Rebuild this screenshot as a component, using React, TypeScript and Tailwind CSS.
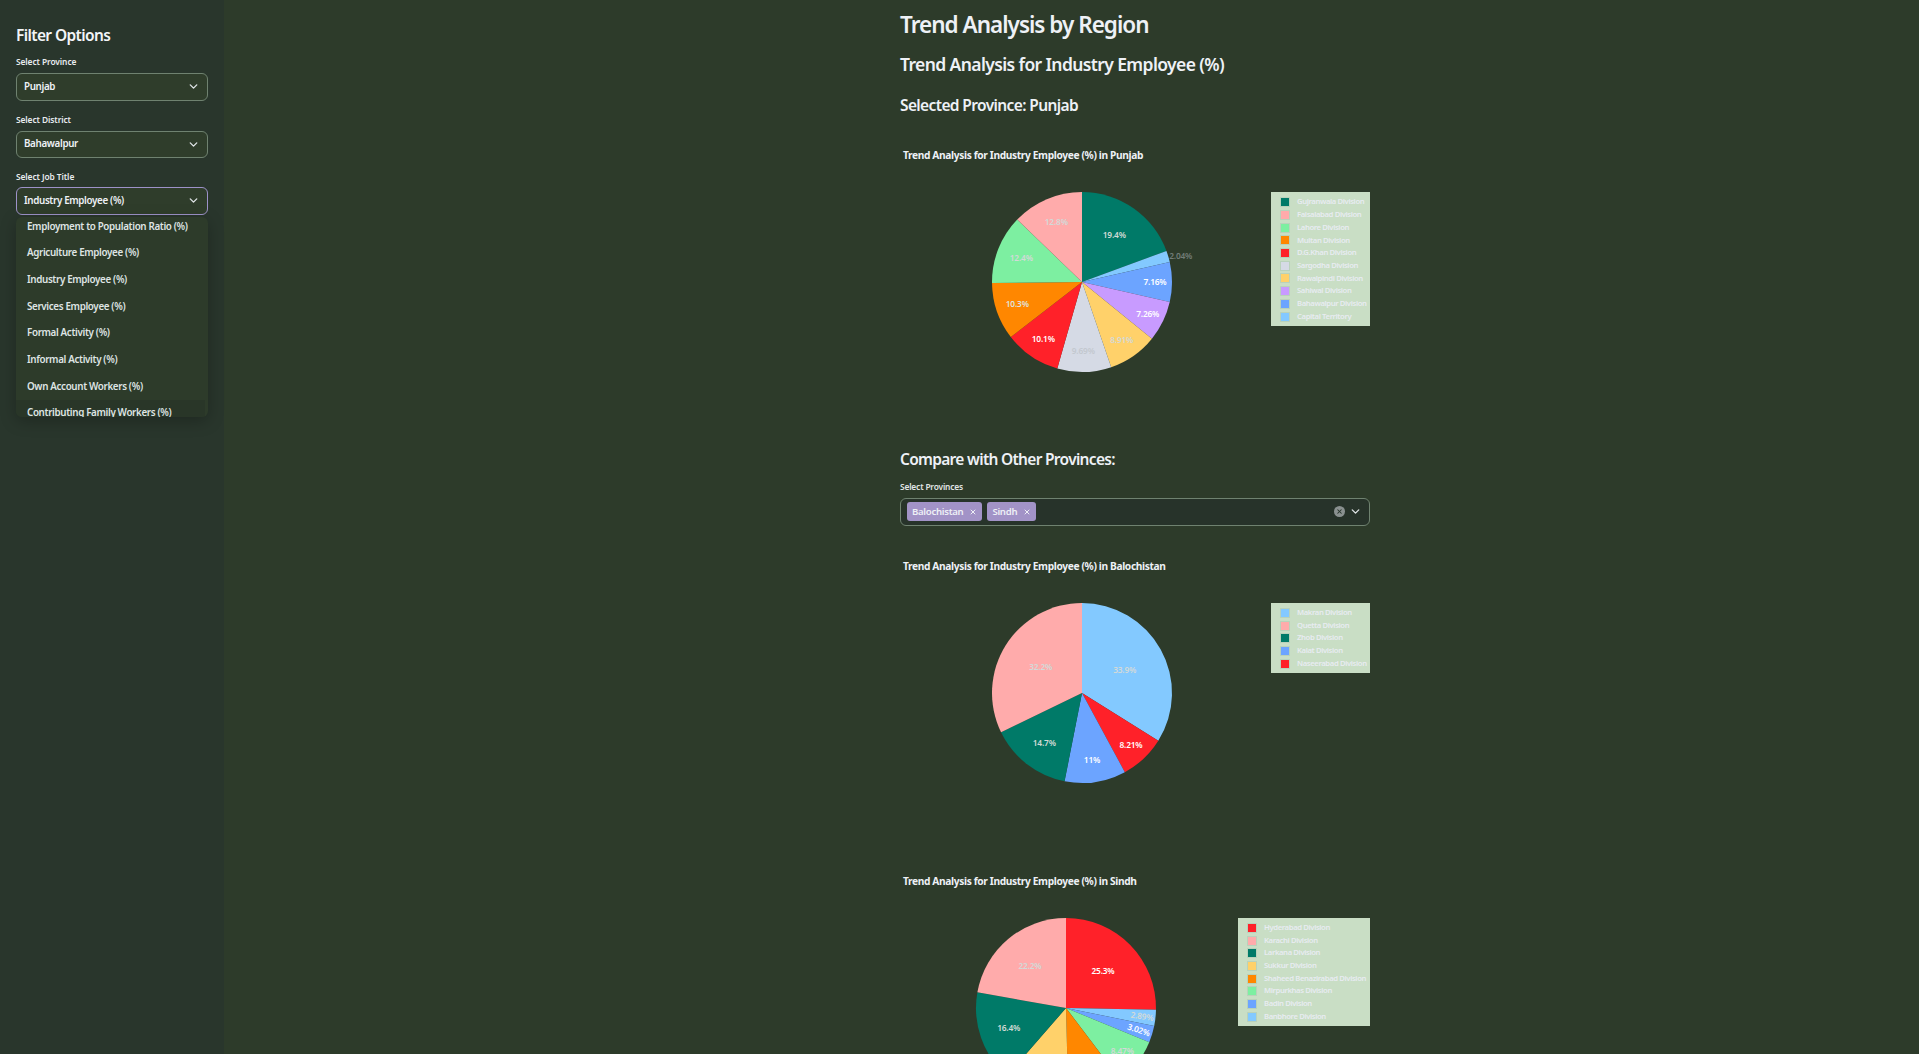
import { ChevronDown, X } from "lucide-react";

const C = {
  teal: "#007A68", pink: "#FFABAB", green: "#7DEFA1", orange: "#FF8700", red: "#FF2129",
  gray: "#D5DAE5", yellow: "#FFD16A", purple: "#C89BFF", blue: "#6CA4FF", sky: "#83C9FF",
};

type Slice = { v: number; c: string };
type Label = { t: string; x: number; y: number; f: string; r?: number };
type Leg = { n: string; c: string };

function arc(cx: number, cy: number, r: number, a: number, b: number) {
  const p = (t: number) => {
    const an = (t / 100) * 2 * Math.PI;
    return `${(cx + r * Math.sin(an)).toFixed(2)} ${(cy - r * Math.cos(an)).toFixed(2)}`;
  };
  const large = b - a > 50 ? 1 : 0;
  return `M${cx} ${cy}L${p(a)}A${r} ${r} 0 ${large} 1 ${p(b)}Z`;
}

function Pie({ cx, slices, labels }: { cx: number; slices: Slice[]; labels: Label[] }) {
  const total = slices.reduce((s, x) => s + x.v, 0);
  let acc = 0;
  return (
    <svg width="310" height="182" className="shrink-0">
      {slices.map((s, i) => {
        const a = acc;
        acc += (s.v / total) * 100;
        return <path key={i} d={arc(cx, 90, 90, a, acc)} fill={s.c} />;
      })}
      {labels.map((l, i) => (
        <text
          key={i}
          x={cx + l.x}
          y={90 + l.y + 3}
          fill={l.f}
          fontSize="8.4"
          fontWeight="600"
          letterSpacing="-0.2"
          textAnchor="middle"
          transform={l.r ? `rotate(${l.r} ${cx + l.x} ${90 + l.y})` : undefined}
        >
          {l.t}
        </text>
      ))}
    </svg>
  );
}

function Legend({ items, w }: { items: Leg[]; w: string }) {
  return (
    <div className={`${w} ml-auto shrink-0 bg-[#c9dec5] pt-[4px] pb-[3px] pl-[9px]`}>
      {items.map((l) => (
        <div key={l.n} className="flex h-[12.7px] items-center">
          <span className="h-[10px] w-[10px] shrink-0 border border-[#b9d2bb]" style={{ background: l.c }} />
          <span className="ml-[7px] whitespace-nowrap text-[7.7px] font-semibold leading-none tracking-[-0.05em] text-[#e8ecf2]">{l.n}</span>
        </div>
      ))}
    </div>
  );
}

function Chart({ title, cx, slices, labels, legend, w, className }: {
  title: string; cx: number; slices: Slice[]; labels: Label[]; legend: Leg[]; w: string; className: string;
}) {
  return (
    <section className={className}>
      <div className="ml-[3px] h-[16px] text-[10.2px] font-bold leading-[16px] tracking-[-0.035em] text-[#eef1f6]">{title}</div>
      <div className="mt-[29px] flex items-start">
        <Pie cx={cx} slices={slices} labels={labels} />
        <Legend items={legend} w={w} />
      </div>
    </section>
  );
}

function Select({ value, focus }: { value: string; focus?: boolean }) {
  return (
    <div className={`flex h-[27.5px] items-center justify-between rounded-[6px] border bg-[#2f3d2b] pl-[7px] pr-[7px] ${focus ? "border-[#9d92c9]" : "border-[#6f8270]"}`}>
      <span className="pt-[1px] text-[9.8px] font-semibold tracking-[-0.035em] text-[#eef1f6]">{value}</span>
      <ChevronDown size={13} strokeWidth={2.5} className="text-[#dfe4e6]" />
    </div>
  );
}

function FieldLabel({ children, className }: { children: string; className: string }) {
  return <div className={`h-[12px] text-[8.4px] font-semibold leading-[12px] tracking-[-0.01em] text-[#e8ecef] ${className}`}>{children}</div>;
}

const options = [
  "Employment to Population Ratio (%)",
  "Agriculture Employee (%)",
  "Industry Employee (%)",
  "Services Employee (%)",
  "Formal Activity (%)",
  "Informal Activity (%)",
  "Own Account Workers (%)",
  "Contributing Family Workers (%)",
];

const punjab: Slice[] = [
  { v: 19.4, c: C.teal }, { v: 2.04, c: C.sky }, { v: 7.16, c: C.blue }, { v: 7.26, c: C.purple },
  { v: 8.91, c: C.yellow }, { v: 9.69, c: C.gray }, { v: 10.1, c: C.red }, { v: 10.3, c: C.orange },
  { v: 12.4, c: C.green }, { v: 12.8, c: C.pink },
];
const soft = "#d3d9d8";
const punjabL: Label[] = [
  { t: "19.4%", x: 32.3, y: -47, f: "#d2dbd6" }, { t: "2.04%", x: 98.7, y: -26, f: "#727d78" },
  { t: "7.16%", x: 73, y: 0, f: "#ffffff" }, { t: "7.26%", x: 65.7, y: 31.7, f: "#ffffff" },
  { t: "8.91%", x: 39.7, y: 58, f: soft }, { t: "9.69%", x: 1.3, y: 69, f: "#c3c8cf" },
  { t: "10.1%", x: -38.7, y: 57, f: "#ffffff" }, { t: "10.3%", x: -64.7, y: 22, f: "#e0e2dc" },
  { t: "12.4%", x: -60.7, y: -24, f: soft }, { t: "12.8%", x: -25.7, y: -60, f: soft },
];
const punjabLeg: Leg[] = [
  { n: "Gujranwala Division", c: C.teal }, { n: "Faisalabad Division", c: C.pink }, { n: "Lahore Division", c: C.green },
  { n: "Multan Division", c: C.orange }, { n: "D.G.Khan Division", c: C.red }, { n: "Sargodha Division", c: C.gray },
  { n: "Rawalpindi Division", c: C.yellow }, { n: "Sahiwal Division", c: C.purple }, { n: "Bahawalpur Division", c: C.blue },
  { n: "Capital Territory", c: C.sky },
];

const balo: Slice[] = [
  { v: 33.9, c: C.sky }, { v: 8.21, c: C.red }, { v: 11, c: C.blue }, { v: 14.7, c: C.teal }, { v: 32.2, c: C.pink },
];
const baloL: Label[] = [
  { t: "33.9%", x: 42.7, y: -23, f: soft }, { t: "8.21%", x: 49, y: 52, f: "#ffffff" }, { t: "11%", x: 10, y: 67, f: "#ffffff" },
  { t: "14.7%", x: -37.7, y: 50, f: "#d2dbd6" }, { t: "32.2%", x: -41.3, y: -26, f: soft },
];
const baloLeg: Leg[] = [
  { n: "Makran Division", c: C.sky }, { n: "Quetta Division", c: C.pink }, { n: "Zhob Division", c: C.teal },
  { n: "Kalat Division", c: C.blue }, { n: "Naseerabad Division", c: C.red },
];

const sindh: Slice[] = [
  { v: 25.3, c: C.red }, { v: 2.89, c: C.sky }, { v: 3.02, c: C.blue }, { v: 8.47, c: C.green },
  { v: 9.9, c: C.orange }, { v: 11.8, c: C.yellow }, { v: 16.4, c: C.teal }, { v: 22.2, c: C.pink },
];
const sindhL: Label[] = [
  { t: "25.3%", x: 37, y: -37, f: "#ffffff" }, { t: "2.89%", x: 76, y: 8.3, f: soft, r: 8 },
  { t: "3.02%", x: 72.7, y: 22, f: "#ffffff", r: 18 }, { t: "8.47%", x: 56.3, y: 43.3, f: soft },
  { t: "22.2%", x: -36, y: -41.7, f: soft }, { t: "16.4%", x: -57.3, y: 20, f: "#d2dbd6" },
];
const sindhLeg: Leg[] = [
  { n: "Hyderabad Division", c: C.red }, { n: "Karachi Division", c: C.pink }, { n: "Larkana Division", c: C.teal },
  { n: "Sukkur Division", c: C.yellow }, { n: "Shaheed Benazirabad Division", c: C.orange }, { n: "Mirpurkhas Division", c: C.green },
  { n: "Badin Division", c: C.blue }, { n: "Banbhore Division", c: C.sky },
];

export default function App() {
  return (
    <div className="flex h-[1054px] w-full overflow-hidden bg-[#2d3b2a] font-['Noto_Sans',sans-serif]">
      <aside className="w-[224px] shrink-0 bg-[#29362c] px-[16px] pt-[24px]">
        <h2 className="h-[22px] text-[15.5px] font-semibold leading-[22px] tracking-[-0.04em] text-[#f3f5f8]">Filter Options</h2>
        <FieldLabel className="mt-[10px]">Select Province</FieldLabel>
        <div className="mt-[5px]"><Select value="Punjab" /></div>
        <FieldLabel className="mt-[13px]">Select District</FieldLabel>
        <div className="mt-[5px]"><Select value="Bahawalpur" /></div>
        <FieldLabel className="mt-[13px]">Select Job Title</FieldLabel>
        <div className="mt-[4px]"><Select value="Industry Employee (%)" focus /></div>
        <div className="mt-[2px] h-[200px] overflow-hidden rounded-[6px] bg-[#2d3b2a] shadow-[0_4px_16px_rgba(0,0,0,0.25)]">
          <div className="-mt-[3px]">
            {options.map((o, i) => (
              <div key={o} className={`mr-[3px] flex h-[26.7px] items-center whitespace-nowrap pl-[11px] text-[9.8px] font-semibold tracking-[-0.035em] text-[#dfe4e4] ${i === 7 ? "bg-[#293628]" : ""}`}>
                {o}
              </div>
            ))}
          </div>
        </div>
      </aside>
      <main className="min-w-0 flex-1 pl-[676px] pt-[10px] text-[#eef1f6]">
        <div className="w-[470px]">
          <h1 className="h-[29px] text-[22.5px] font-semibold leading-[29px] tracking-[-0.044em]">Trend Analysis by Region</h1>
          <h2 className="mt-[11px] h-[28px] text-[17.5px] font-semibold leading-[28px] tracking-[-0.035em]">Trend Analysis for Industry Employee (%)</h2>
          <h3 className="mt-[15px] h-[24px] text-[15.5px] font-semibold leading-[24px] tracking-[-0.04em]">Selected Province: Punjab</h3>
          <Chart className="mt-[30px]" title="Trend Analysis for Industry Employee (%) in Punjab" cx={182} slices={punjab} labels={punjabL} legend={punjabLeg} w="w-[99px]" />
          <h3 className="mt-[73px] h-[24px] text-[15.5px] font-semibold leading-[24px] tracking-[-0.045em]">Compare with Other Provinces:</h3>
          <div className="mt-[10px] h-[12px] text-[8.4px] font-semibold leading-[12px] tracking-[-0.02em] text-[#e0e5e5]">Select Provinces</div>
          <div className="mt-[5px] flex h-[27.5px] items-center rounded-[6px] border border-[#6f8270] bg-[#27332a] pl-[6px] pr-[7px]">
            {["Balochistan", "Sindh"].map((t) => (
              <span key={t} className="mr-[5px] flex h-[19px] items-center rounded-[3px] bg-[#a293c7] pl-[5px] pr-[5px] text-[9.6px] font-semibold tracking-[-0.03em] text-[#eef0f6]">
                {t}
                <X size={8} strokeWidth={3} className="ml-[6px] text-[#eef0f6]" />
              </span>
            ))}
            <span className="ml-auto flex h-[11px] w-[11px] items-center justify-center rounded-full bg-[#8a9190]">
              <X size={7} strokeWidth={3.5} className="text-[#27332a]" />
            </span>
            <ChevronDown size={13} strokeWidth={2.5} className="ml-[4px] text-[#dfe4e6]" />
          </div>
          <Chart className="mt-[32px]" title="Trend Analysis for Industry Employee (%) in Balochistan" cx={182} slices={balo} labels={baloL} legend={baloLeg} w="w-[99px]" />
          <Chart className="mt-[88px]" title="Trend Analysis for Industry Employee (%) in Sindh" cx={166} slices={sindh} labels={sindhL} legend={sindhLeg} w="w-[132px]" />
        </div>
      </main>
    </div>
  );
}
